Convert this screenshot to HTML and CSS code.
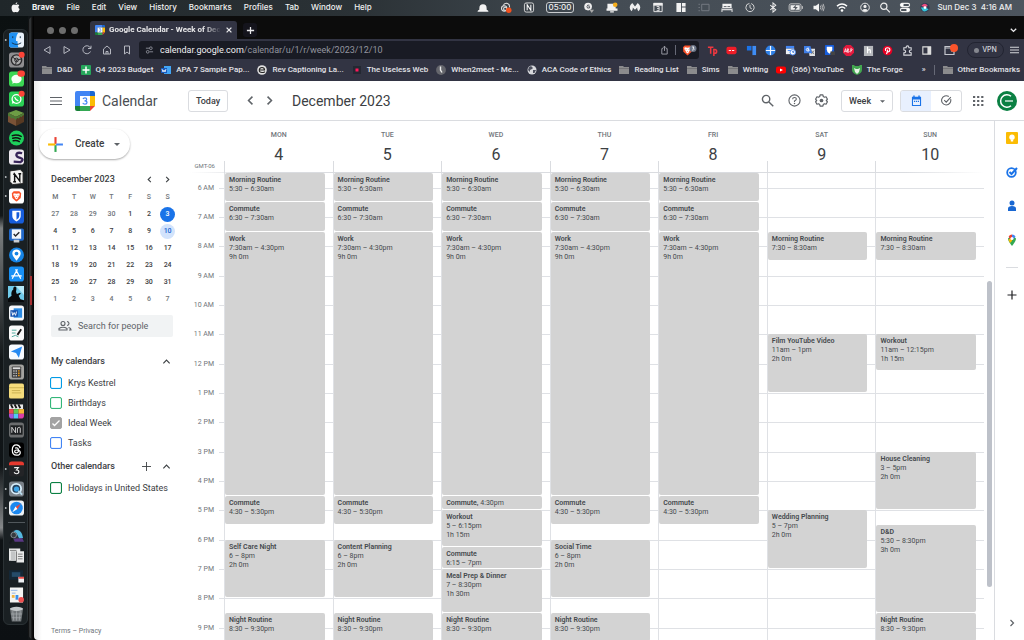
FILE: index.html
```html
<!DOCTYPE html>
<html lang="en">
<head>
<meta charset="utf-8">
<meta name="viewport" content="width=device-width, initial-scale=1">
<title>Google Calendar - Week of December 4, 2023</title>
<link rel="stylesheet" href="styles.css">
</head>
<body>
<svg class="defs" aria-hidden="true">
  <symbol id="gcal" viewBox="0 0 20 20"><path fill="#4285f4" d="M2 0h13v5H5v10H0V2q0-2 2-2z"/><path fill="#1967d2" d="M15 0h3q2 0 2 2v3h-5z"/><path fill="#fbbc04" d="M15 5h5v10h-5z"/><path fill="#34a853" d="M5 15h10v5H5z"/><path fill="#188038" d="M0 15h5v5H2q-2 0-2-2z"/><path fill="#ea4335" d="M15 15h5l-5 5z"/><path fill="#fff" d="M5 5h10v10H5z"/><path fill="none" stroke="#4285f4" stroke-width="1.2" d="M8 8q.4-1.2 2-1.2 1.700 0 1.700 1.500T9.500 9.900q2.500 0 2.500 1.600 0 1.700-2 1.700-1.700 0-2.200-1.300"/></symbol>
  <symbol id="folder" viewBox="0 0 10 10"><path fill="#8b8b8d" d="M0 1h4l1 1h5v7H0z"/><path fill="#747477" d="M0 3h10v1H0z"/></symbol>
  <symbol id="left" viewBox="0 0 10 10"><path fill="none" stroke="currentColor" stroke-width="1.200" d="M6.500 2 3.500 5l3 3"/></symbol>
  <symbol id="right" viewBox="0 0 10 10"><path fill="none" stroke="currentColor" stroke-width="1.200" d="M3.500 2l3 3-3 3"/></symbol>
  <symbol id="up" viewBox="0 0 10 10"><path fill="none" stroke="currentColor" stroke-width="1.300" d="M1.500 7 5 3.500 8.500 7"/></symbol>
  <symbol id="lens" viewBox="0 0 12 12"><g fill="none" stroke="currentColor" stroke-width="1.300"><circle cx="4.700" cy="4.700" r="3.400"/><path d="m7.300 7.300 4 4"/></g></symbol>
  <symbol id="lion" viewBox="0 0 12 12"><path fill="#fb542b" d="M3 1h6l2 2-.5 5L6 12 1.500 8 1 3z"/><path fill="#fff" d="m3 3 3 .6L9 3l.5 2L8 7l-.5 1.500L6 9.800 4.500 8.500 4 7 2.500 5z"/><path fill="#fb542b" d="m3.700 5 1.300.3-.5.7zM8.300 5 7 5.300l.5.7zM5 7h2L6 8z"/></symbol>
</svg>

<header class="menubar">
  <nav class="menus" aria-label="Application menu">
    <svg class="apple" viewBox="0 0 10 12"><path fill="#f3f3f3" d="M5 3.300c.8 0 1.300-.6 2.200-.5 1 0 1.600.5 2 1.100-1.500 1-1.300 3.200.4 3.900C9 9.800 8 11.400 7 11.400c-.7 0-1-.4-1.900-.4s-1.200.4-1.900.4C1.900 11.400.6 8.800.6 6.500c0-2.500 1.400-3.700 2.700-3.700.7 0 1.200.5 1.700.5zM5 2.600C5 1.200 6 .3 7 .2 7.100 1.500 6 2.600 5 2.600z"/></svg>
    <b>Brave</b><span>File</span><span>Edit</span><span>View</span><span>History</span><span>Bookmarks</span><span>Profiles</span><span>Tab</span><span>Window</span><span>Help</span>
  </nav>
  <div class="status">
    <svg viewBox="0 0 12 12"><path fill="#f2f2f2" d="M2 8.500V7q0-4.500 4-4.500T10 7v1.500q2 .5 2 2H0q0-1.500 2-2z"/></svg>
    <svg viewBox="0 0 12 12"><g fill="none" stroke="#ddd" stroke-width="1.200"><circle cx="4" cy="7" r="2.900"/><path d="M3 4q1-3 4-2.500T10 6M6 6q-2-1-2.500 1t2 2"/></g><circle cx="9" cy="9" r="3" fill="#f4511e"/></svg>
    <svg viewBox="0 0 12 12"><rect x="1" y="1" width="10" height="10" rx="2" fill="none" stroke="#ddd"/><path fill="none" stroke="#fff" stroke-width="1.100" d="M4 9V3l4 6V3"/></svg>
    <span class="timer">05:00</span>
    <svg viewBox="0 0 12 12"><circle cx="5" cy="5" r="4.200" fill="#eee"/><path fill="none" stroke="#4a5058" d="M6.500 3.500Q4 2.500 3.800 5T6.600 6.500V5H5.500"/><path fill="#aaa" d="M6.500 8.500h5L9 12z"/></svg>
    <svg viewBox="0 0 12 12"><path fill="#f2f2f2" d="M1 2h9v7H1zM4 10h4v1.500H4zM0 7h12v2.500H0z"/><circle cx="9.500" cy="3" r="2.500" fill="#f5ad1b"/></svg>
    <svg viewBox="0 0 12 12"><path fill="#eee" d="M2 10Q-2 5 3 1l3 4 3-4q5 4 1 9-2-1-1.500-4L6 8.500 3.500 6Q4 9 2 10z"/></svg>
    <svg viewBox="0 0 12 12"><path fill="none" stroke="#eee" d="M1.500 1.500h9v9h-9z"/><path fill="#eee" d="M1 1h10v3H1z"/><path fill="none" stroke="#eee" d="M4.500 5h2.700v4.500H4.500M5 7.200h2"/></svg>
    <svg viewBox="0 0 12 12"><path fill="#f2f2f2" d="M1 1h5v10H1zM7 1h4v4H7zM7 6h4v5H7z"/></svg>
    <svg viewBox="0 0 12 12"><path fill="none" stroke="#777d84" d="M3.500 2.500h8v7h-8zM0 2.500h1.500M0 6h1.500M0 9.500h1.500"/></svg>
    <svg viewBox="0 0 12 12"><path fill="#f2f2f2" d="M1 2h10v4l1 1v4h-1V9H1v2H0V7l1-1z"/><path stroke="#555b62" d="M2.500 5h3M6.500 5h3M0 7.300h12"/></svg>
    <svg viewBox="0 0 12 12"><g fill="none" stroke="#ddd"><circle cx="6" cy="6" r="4.500" stroke-dasharray="20 2"/><path d="M6 3v3.300L8 7.500"/></g></svg>
    <svg viewBox="0 0 12 12"><path fill="none" stroke="#eee" stroke-width="1.100" d="m3 3.500 6 5L6 11V1l3 2.500-6 5"/></svg>
    <svg class="battery" viewBox="0 0 16 12"><rect x=".5" y="2" width="13" height="8" rx="2" fill="none" stroke="#ccc"/><rect x="2" y="3.500" width="10" height="5" fill="#eee"/><path fill="#555b62" d="m8.500 2.500-4 4H7L6 10l4-4.500H7.500z"/><path stroke="#ccc" d="M15 4.500v3"/></svg>
    <svg viewBox="0 0 12 12"><path fill="#f2f2f2" d="M0 4h2.500L6 1.500v9L2.500 8H0z"/><path fill="none" stroke="#ccc" stroke-width=".9" d="M7.500 4q1 2 0 4M9 3q2 3 0 6M10.500 2q2.500 4 0 8"/></svg>
    <svg viewBox="0 0 12 12"><path fill="none" stroke="#fff" stroke-width="1.500" d="M.5 4.500q5.500-4.500 11 0M2.500 7q3.500-3 7 0"/><circle cx="6" cy="9.200" r="1.400" fill="#fff"/></svg>
    <svg viewBox="0 0 12 12"><circle cx="6" cy="6" r="4.700" fill="none" stroke="#eee"/><circle cx="6" cy="4.800" r="1.700" fill="#eee"/><path fill="#eee" d="M2.700 9q3.300-3 6.600 0Q6 11.500 2.700 9z"/></svg>
    <svg class="near" viewBox="0 0 12 12" color="#eee"><use href="#lens"/></svg>
    <svg class="near" viewBox="0 0 12 12"><g fill="none" stroke="#eee" stroke-width="1.200"><rect x="1" y="1.500" width="10" height="3.500" rx="1.700"/><rect x="1" y="7" width="10" height="3.500" rx="1.700"/></g><circle cx="3" cy="3.200" r="1.600" fill="#fff"/><circle cx="9" cy="8.700" r="1.600" fill="#fff"/></svg>
    <svg class="near" viewBox="0 0 12 12"><circle cx="6" cy="6" r="5" fill="#313a55"/><path fill="#e84c7c" d="M2 4q4-4 7 0L6 6z"/><path fill="#36c3d8" d="M1.500 6h5L10 8q-4 4-7 1z"/><circle cx="6" cy="6" r="1.500" fill="#fff"/></svg>
    <time>Sun Dec 3&nbsp; 4:16 AM</time>
  </div>
</header>

<main class="desktop">
  <aside class="dockside">
    <div class="dock" aria-label="Dock">
      <svg viewBox="0 0 16 16"><circle class="dot" cx="-3.500" cy="8" r="1"/><rect width="16" height="16" rx="3" fill="#e9f2fa"/><path fill="#1e90f2" d="M3 0h7q-3 4-2.500 9H9q0 4 1 7H3q-3 0-3-3V3q0-3 3-3z"/><path fill="none" stroke="#16324a" d="M4 4v2M12 4v2M3 11q5 3.500 10 0"/></svg>
      <svg viewBox="0 0 16 16"><rect width="16" height="16" rx="3" fill="#8e8e90"/><circle cx="8" cy="8" r="5.500" fill="#ababab" stroke="#2b2b2d" stroke-width="1.500"/><path stroke="#2b2b2d" fill="none" d="m4 5 4 3 5-1M8 8l-1 5"/><circle cx="8" cy="8" r="2" fill="none" stroke="#2b2b2d"/><circle cx="13.500" cy="2.500" r="3.200" fill="#fb4437"/></svg>
      <svg viewBox="0 0 16 16"><rect width="16" height="16" rx="3" fill="#3bd753"/><ellipse cx="8" cy="8" rx="5.500" ry="4.500" fill="#f6fff6"/><path fill="#f6fff6" d="m4 10-.5 3L7 11.500z"/><rect x="9" y="-1" width="8" height="6.500" rx="3.200" fill="#fb4437"/></svg>
      <svg viewBox="0 0 16 16"><rect width="16" height="16" rx="3" fill="#2bd155"/><circle cx="8" cy="8" r="4.700" fill="none" stroke="#fff" stroke-width="1.400"/><path fill="#fff" d="m3 13 1-3.500L6.500 12z"/><path fill="none" stroke="#fff" stroke-width="1.500" d="M6 6q1 3 4 4"/><circle cx="13.500" cy="2.500" r="3.200" fill="#fb4437"/></svg>
      <svg class="wide" viewBox="0 0 16 16"><path fill="#6d9d45" d="m8 0 8 3-8 4-8-4z"/><path fill="#795236" d="m0 3 8 4v9l-8-4z"/><path fill="#573922" d="m16 3-8 4v9l8-4z"/><path fill="#4b7a34" d="m0 3 8 4 8-4v2l-2 1v1l-2-.5-1 2-2-.5-1 2-2-1.500-1-.5-2 .5-1-2-2-.5z"/></svg>
      <svg viewBox="0 0 16 16"><circle cx="8" cy="8" r="8" fill="#1ed05b"/><path fill="none" stroke="#111" stroke-linecap="round" stroke-width="1.600" d="M3.500 5.500q5-1.500 9.500.8M4 8.300q4-1.200 8 .8M4.500 11q3.500-1 6.500.8"/></svg>
      <svg viewBox="0 0 16 16"><rect width="16" height="16" rx="3" fill="#eee9ef"/><path fill="none" stroke="#382459" stroke-width="2.500" d="M14 4q-5-1.500-6 1t4 4 0 4.500L5 13"/></svg>
      <svg viewBox="0 0 16 16"><circle class="dot" cx="-3.500" cy="8" r="1"/><path fill="#f5f5f3" stroke="#222" d="M1 1.500 12 0l3 3v12L4 16l-3-3z"/><path fill="none" stroke="#111" stroke-width="1.500" d="M6 13V5l5.500 7.500V4.500M4.500 5h2M10 4.500h3M4.500 13h3"/></svg>
      <svg viewBox="0 0 16 16"><circle class="dot" cx="-3.500" cy="8" r="1"/><rect width="16" height="16" rx="3" fill="#fff"/><use href="#lion" x="2" y="2" width="12" height="12"/></svg>
      <svg viewBox="0 0 16 16"><rect width="16" height="16" rx="3" fill="#175ddc"/><path fill="#fff" d="M3.500 2.500h9V8q0 3.500-4.500 5.800Q3.500 11.500 3.500 8z"/><path fill="#175ddc" d="M8 4v8q3-1.700 3-4V4z"/></svg>
      <svg viewBox="0 0 16 16"><rect y="1" width="16" height="13" rx="2" fill="#2168c9"/><path fill="#f5f8fb" d="M3 2h10v10H3z"/><path fill="none" stroke="#25282c" stroke-width="1.500" d="m5 7 2 2 4-4"/><path fill="#c9cdd3" d="M5 13h6v3H5z"/></svg>
      <svg viewBox="0 0 16 16"><circle cx="8" cy="8" r="8" fill="#1684e6"/><path fill="#fff" d="M8 14Q3.500 9 3.500 6.500a4.500 4.500 0 0 1 9 0Q12.500 9 8 14z"/><circle cx="8" cy="6.500" r="2" fill="#1684e6"/></svg>
      <svg viewBox="0 0 16 16"><rect width="16" height="16" rx="3" fill="#1890f5"/><path fill="none" stroke="#fff" stroke-linecap="round" stroke-width="1.400" d="m8.700 3.500-5 9M7.300 3.500l5 9M3 10h6.500M11.500 10H13"/></svg>
      <svg class="wide" viewBox="0 0 18 18"><path fill="#71cbea" d="M0 0h18v18H0z"/><path fill="#b8e9f7" d="M9 0h9v10z"/><path fill="#080a0c" d="M0 18v-4l4-3q-1-5 2-7-.5-3 2-3.500 2 .5 1.500 3L9 6.500 10 9l3.500-1.500 1 1L12 11l2 4 4 1v2z"/></svg>
      <svg viewBox="0 0 16 16"><rect width="16" height="16" rx="3" fill="#f5f7fa"/><path fill="#2c8ce4" d="M5 3h9v10H5z"/><path fill="#1651ae" d="M1.500 5h8v7h-8z"/><path fill="none" stroke="#fff" d="m3 6.500 1 4 1.500-3 1.500 3 1-4"/></svg>
      <svg viewBox="0 0 16 16"><rect width="16" height="16" rx="3" fill="#fafafa"/><path fill="none" stroke="#49a99b" d="M3 5h5M3 8h4M3 12q4-3 7 0"/><path stroke="#181818" stroke-width="2" d="m9 10 4-6"/></svg>
      <svg viewBox="0 0 16 16"><rect width="16" height="16" rx="3" fill="#f8fbff"/><path fill="#288bf2" d="M2 7.500 14 2l-3.500 12-3-5z"/></svg>
      <svg viewBox="0 0 16 16"><rect width="16" height="16" rx="3" fill="#a3a3a0"/><rect x="3" y="2" width="10" height="12" rx="1" fill="#3d3d3d"/><path fill="#ddd" d="M4 3h8v2H4z"/><path stroke="#bbb" stroke-width="1.500" stroke-dasharray="1.500 1" d="M4.500 7h4.500M4.500 9.500h4.500M4.500 12h4.500"/><path stroke="#ff9f0a" stroke-width="1.500" stroke-dasharray="1.500 1" d="M10.500 6v7"/></svg>
      <svg viewBox="0 0 16 16"><rect width="16" height="16" rx="2" fill="#f5dc7c"/><path stroke="#cbb151" d="M0 4.500h16M3 7.500h9M3 10h10"/></svg>
      <svg viewBox="0 0 16 16"><path fill="#e9e9e9" d="M0 1h15v5H0z"/><path stroke="#161616" stroke-width="2" d="m2 1 2 4M6 1l2 4M10 1l2 4"/><path fill="#ed4b4f" d="M0 6h5v5H0z"/><path fill="#62c953" d="M5 6h5v5H5z"/><path fill="#f3b634" d="M10 6h6v5h-6z"/><path fill="#a950d8" d="M0 11h5v5H3q-3 0-3-3z"/><path fill="#4ec9f5" d="M5 11h5v5H5z"/><path fill="#db3fa6" d="M10 11h6v2q0 3-3 3h-3z"/></svg>
      <svg viewBox="0 0 16 16"><rect width="16" height="16" rx="3" fill="#6b6d6e"/><rect x="1.500" y="3" width="13" height="10" fill="#1e2022"/><path fill="none" stroke="#d5d5d5" d="M3 11V5l4 6V5M9 11V6q3-2 3 0v5"/></svg>
      <svg viewBox="0 0 16 16"><rect width="16" height="16" rx="3" fill="#000"/><path fill="none" stroke="#fff" stroke-width="1.300" d="M12 6Q11 2.500 8 2.500 3.500 2.500 3.500 8T8 13.500q4 0 4-2.700Q12 8 8 8q-2 0-2 1.500T8 11q2.500 0 2-3.500Q9.500 5 6.500 6"/></svg>
      <svg viewBox="0 0 16 16"><circle class="dot" cx="-3.500" cy="8" r="1"/><rect width="16" height="16" rx="3" fill="#232427"/><path fill="#e5392f" d="M3 0h10q3 0 3 3v1H0V3q0-3 3-3z"/><path fill="none" stroke="#f1f1f1" stroke-width="1.200" d="M5.500 6.500h4.500L8 9q2.500 0 2.500 2T8 13q-2 0-2.500-1.500"/></svg>
      <svg viewBox="0 0 16 16"><circle class="dot" cx="-3.500" cy="8" r="1"/><rect width="16" height="16" rx="3" fill="#7a8188"/><circle cx="7.700" cy="7.700" r="5.200" fill="#25425d" stroke="#d7edf9" stroke-width="2"/><circle cx="8" cy="8" r="2.800" fill="#3ea5e8"/><path stroke="#b8dcef" stroke-width="2" d="m10 10 4 4"/></svg>
      <svg viewBox="0 0 16 16"><circle class="dot" cx="-3.500" cy="8" r="1"/><rect width="16" height="16" rx="3" fill="#edf1f4"/><circle cx="8" cy="8" r="6.700" fill="#1c88ef"/><path fill="#f14637" d="m12.500 3.500-3.500 6L7 7z"/><path fill="#fff" d="m3.500 12.500 3.500-6L9 9z"/></svg>
      <hr>
      <svg viewBox="0 0 16 16"><circle cx="8" cy="7" r="6" fill="#27343f"/><path fill="#55b8df" d="M5 3q5-4 9 3l1 4-4 1-3-6z"/><circle cx="5" cy="7" r="3" fill="#373b40" stroke="#8b9298"/><path fill="#5a3785" d="m5 11 9-1 2 4H6z"/><path stroke="#16191e" stroke-width="2" d="m4 10-3 6"/></svg>
      <svg viewBox="0 0 16 16"><path fill="#e9eaea" d="M0 0h12v13H0zM8 3h8v12H8z"/><path fill="#c3c5c6" d="M2 3h5v10H2z"/><path fill="none" stroke="#777" d="M1 2h7M9.500 6h5M9.500 8.500h5M9.500 11h5M8 3v11"/></svg>
      <svg viewBox="0 0 16 16"><path fill="#142736" d="M0 3h15v10H0z"/><path fill="#264b69" d="M3 5h9v5H3z"/><path fill="#eceff2" d="M10 10h6v6h-6z"/><path fill="#e94e48" d="M10 10h6v2h-6z"/></svg>
      <svg viewBox="0 0 16 16"><path fill="#f4f4f2" d="M1 0h14v16H1z"/><path stroke="#8cb0e5" d="M2 3h7M3 6h4"/><path fill="#f0b341" d="M3 8h3v3H3z"/><path fill="#398eea" d="M7 8h3v5H7z"/><circle cx="13" cy="13" r="3" fill="#ef5050"/></svg>
      <svg viewBox="0 0 16 16"><path fill="#72777a" d="m1 2 2 14h10l2-14z"/><ellipse cx="8" cy="2.500" rx="7" ry="2.200" fill="#c4c8ca"/><path fill="none" stroke="#a9aeb1" stroke-width=".7" d="m4 5 1 10M8 5v10M12 5l-1 10M2 8h12M3 12h10"/></svg>
    </div>
  </aside>

  <section class="frame">
    <div class="window">
      <div class="tabs">
        <span class="lights"><i></i><i></i><i></i></span>
        <div class="tab"><svg viewBox="0 0 20 20"><use href="#gcal"/></svg><span>Google Calendar - Week of Dec</span><button aria-label="Close tab"><svg viewBox="0 0 10 10"><path stroke="currentColor" stroke-width="1.600" d="m2 2 6 6M8 2 2 8"/></svg></button></div>
        <button class="newtab" aria-label="New tab"><svg viewBox="0 0 10 10"><path stroke="currentColor" stroke-width="1.400" d="M5 1v8M1 5h8"/></svg></button>
        <button class="tablist" aria-label="Search tabs"><svg viewBox="0 0 10 10"><path fill="none" stroke="currentColor" stroke-width="1.500" d="m2 3 3 3 3-3"/></svg></button>
      </div>
      <div class="toolbar">
        <div class="nav">
          <button aria-label="Back"><svg viewBox="0 0 10 10"><path d="M8 1.500v7L2 5z"/></svg></button>
          <button aria-label="Forward"><svg viewBox="0 0 10 10"><path d="M2 1.500v7L8 5z"/></svg></button>
          <button aria-label="Reload"><svg viewBox="0 0 10 10"><path d="M8.500 6.500A4 4 0 1 1 8.500 3M9 .7V3.500H6"/></svg></button>
          <button aria-label="Home"><svg viewBox="0 0 10 10"><path d="M1.500 9V4L5 1l3.500 3v5zM4 9V6.500h2V9"/></svg></button>
          <button aria-label="Bookmark"><svg viewBox="0 0 10 10"><path d="M2.500 1h5v8L5 7 2.500 9z"/></svg></button>
        </div>
        <div class="address">
          <svg viewBox="0 0 10 10"><path fill="none" stroke="#8d909a" d="M1 3h4M5 7h4"/><circle cx="6.500" cy="3" r="1.500" fill="none" stroke="#8d909a"/><circle cx="3" cy="7" r="1.500" fill="none" stroke="#8d909a"/></svg>
          <span class="url"><em>calendar.google.com</em>/calendar/u/1/r/week/2023/12/10</span>
          <svg viewBox="0 0 10 10"><path fill="none" stroke="#a1a3ac" d="M3.500 3.500H2v6h6v-6H6.500M5 6V.800M3.300 2.500 5 .800l1.700 1.700"/></svg>
          <i class="bar"></i>
          <svg class="shield" viewBox="0 0 16 12"><use href="#lion" width="11" height="12"/><circle cx="11" cy="4.500" r="3.500" fill="#6d7688"/><path fill="none" stroke="#fff" stroke-width=".8" d="M10 3h2L11 4.200q1.300.2 1 1.200t-2 .6"/></svg>
        </div>
        <div class="exts">
          <svg viewBox="0 0 12 12"><path fill="none" stroke="#ef3840" stroke-width="1.700" d="M1 2.500h6M4 2.500v7M7.500 12V5h1q2 0 2 2t-2 2h-1"/></svg>
          <svg viewBox="0 0 12 12"><rect x=".5" y="2" width="11" height="8" rx="2" fill="#f01d28"/><path stroke="#fff" d="M3 6h2.500M6.500 6H9"/></svg>
          <svg viewBox="0 0 12 12"><path fill="#1a73e8" d="M1 1h5v5H1z"/><path fill="#3f8df5" d="M7 1h4v10H7z"/></svg>
          <svg viewBox="0 0 12 12"><circle cx="6" cy="6" r="5.500" fill="#2f80e7"/><path stroke="#f4f8ff" stroke-width="1.300" d="M6 1v10M1 6h10"/></svg>
          <svg viewBox="0 0 12 12"><path fill="#4285f4" d="M1 1h9v3H1z"/><path fill="#eef1f6" d="M1 4h9v6H1z"/><circle cx="8.500" cy="8" r="3" fill="#fff" stroke="#4285f4"/><path stroke="#4285f4" d="M3 6h3M8.500 6.500V8H10"/></svg>
          <svg viewBox="0 0 12 12"><path fill="#e1e3e6" d="M5 4h7v8H6z"/><path fill="#3f7ee7" d="M0 1h7l2 8H0z"/><path fill="none" stroke="#fff" d="M5.500 3.500q-3-.5-3 1.500t3 1.500V5H4"/><path stroke="#777" d="m8 6 3 4M11 6 8 10"/></svg>
          <svg viewBox="0 0 12 12"><rect x="1" y="0" width="10" height="11" rx="1" fill="#175ddc"/><path fill="#fff" d="M3 2h6v3q0 3-3 4.500Q3 8 3 5z"/><path fill="#444" d="M7 7h5v4H7z"/></svg>
          <svg viewBox="0 0 12 12"><path fill="#e4193c" d="M3.500 0h5L12 3.500v5L8.500 12h-5L0 8.500v-5z"/><path fill="none" stroke="#fff" stroke-width=".8" d="m1.500 8 1.300-4L4 8M2 6.800h1.800M5 4v4q4-.3 0-2 3-1.500 0-2M8.500 8V4q3.500 1 0 2.300"/></svg>
          <svg viewBox="0 0 12 12"><path fill="#b5b7bc" d="M1 1h10v11H1z"/><path fill="none" stroke="#fff" stroke-width="1.300" d="M5 2v7M5 6q3-2 3 0v3"/></svg>
          <svg viewBox="0 0 12 12"><circle cx="6" cy="6" r="5.300" fill="#e60023"/><path fill="none" stroke="#fff" stroke-width="1.300" d="M4 6.500Q3 3 6 3t2.500 2.500Q8 8 6 7.500M6.200 5 5 10"/></svg>
          <svg viewBox="0 0 12 12"><path fill="none" stroke="#d5d6dc" stroke-width="1.200" d="M2 3h2.500q0-2 1.500-2t1.500 2H10v2.500Q8 5.500 8 7t2 1.500V11H2V8.500q2 0 2-1.500T2 5.500z"/></svg>
          <svg viewBox="0 0 12 12"><path fill="none" stroke="#ddd" stroke-width="1.200" d="M2 2h8.500v8H2z"/><path fill="#ddd" d="M7 2h4v8H7z"/></svg>
        </div>
        <svg class="wallet" viewBox="0 0 14 12"><path fill="none" stroke="#c5c7ce" stroke-width="1.200" d="M10 6v4.500H1v-8h7M1 4h8M7 7h3"/><circle cx="10" cy="4" r="4" fill="#fb542b"/></svg>
        <button class="vpn"><i></i>VPN</button>
        <button class="burger" aria-label="Menu"><svg viewBox="0 0 10 10"><path stroke="currentColor" stroke-width="1.200" d="M0 2h10M0 5h10M0 8h10"/></svg></button>
      </div>
      <nav class="bookmarks" aria-label="Bookmarks">
        <a href="#"><svg viewBox="0 0 10 10"><use href="#folder"/></svg>D&amp;D</a>
        <a href="#"><svg viewBox="0 0 10 10"><rect width="10" height="10" rx="1" fill="#26a65b"/><path stroke="#fff" stroke-width="1.500" d="M5 1.500v7M1.500 5h7"/></svg>Q4 2023 Budget</a>
        <a href="#"><svg viewBox="0 0 10 10"><path fill="#42a5f5" d="M3 1h7v8H3z"/><path fill="#185abd" d="M0 3h6v5H0z"/><path fill="none" stroke="#fff" stroke-width=".8" d="m1 4 1 3 1-2 1 2 1-3"/></svg>APA 7 Sample Pap...</a>
        <a href="#"><svg viewBox="0 0 10 10"><circle cx="5" cy="5" r="4.800" fill="#e1e1e1"/><path fill="none" stroke="#222" stroke-width="1.200" d="M3 5h4.500q0-2.500-2.500-2.500T2.300 5 5 7.500t2.500-1"/></svg>Rev Captioning La...</a>
        <a href="#"><svg viewBox="0 0 10 10"><path fill="#232832" d="M1 1h8v8H1z"/><path fill="#ff175a" d="M3.500 3.500h3v3h-3z"/></svg>The Useless Web</a>
        <a href="#"><svg viewBox="0 0 10 10"><circle cx="5" cy="5" r="4.900" fill="#65666c"/><path fill="none" stroke="#eee" stroke-width="1.400" d="M4.500 1.500V5L6 7.500"/></svg>When2meet - Me...</a>
        <a href="#"><svg viewBox="0 0 10 10"><circle cx="5" cy="5" r="4.500" fill="#d7d8dc"/><path fill="#4c4f5d" d="m2 2 2-1 2 2-1 1-2 1v2L1 5zM6 5h3L7.500 8 6 8z"/></svg>ACA Code of Ethics</a>
        <a href="#"><svg viewBox="0 0 10 10"><use href="#folder"/></svg>Reading List</a>
        <a href="#"><svg viewBox="0 0 10 10"><use href="#folder"/></svg>Sims</a>
        <a href="#"><svg viewBox="0 0 10 10"><use href="#folder"/></svg>Writing</a>
        <a href="#"><svg viewBox="0 0 10 10"><rect y="1.500" width="10" height="7" rx="2" fill="#f00"/><path fill="#fff" d="m4 3.500 3 1.500-3 1.500z"/></svg>(366) YouTube</a>
        <a href="#"><svg viewBox="0 0 10 10"><path fill="#43a650" d="M0 0h2l1 1h4l1-1h2v5q0 3-5 5-5-2-5-5z"/><path fill="#e7f4e7" d="m2 3 2 1h2l2-1-1 4-2 2-2-2z"/></svg>The Forge</a>
        <button class="more" aria-label="More bookmarks">»</button><i class="bar"></i>
        <a href="#"><svg viewBox="0 0 10 10"><use href="#folder"/></svg>Other Bookmarks</a>
      </nav>

      <div class="page">
        <header class="apphead">
          <button class="icon" aria-label="Main menu"><svg viewBox="0 0 12 12"><path stroke="currentColor" stroke-width="1.200" d="M0 2.500h12M0 6h12M0 9.500h12"/></svg></button>
          <svg class="logo" viewBox="0 0 20 20"><use href="#gcal"/></svg>
          <span class="brand">Calendar</span>
          <button class="today">Today</button>
          <button class="icon step" aria-label="Previous week"><svg viewBox="0 0 10 10"><use href="#left"/></svg></button>
          <button class="icon step" aria-label="Next week"><svg viewBox="0 0 10 10"><use href="#right"/></svg></button>
          <h1>December 2023</h1>
          <div class="tools">
            <button class="icon" aria-label="Search"><svg viewBox="0 0 12 12"><use href="#lens"/></svg></button>
            <button class="icon" aria-label="Help"><svg viewBox="0 0 14 14"><g fill="none" stroke="currentColor" stroke-width="1.200"><circle cx="7" cy="7" r="6"/><path d="M5 5.700Q5 3.800 7 3.800t2 1.700Q9 6.500 7 7.500v1.200"/></g><circle cx="7" cy="10.300" r=".8" fill="currentColor"/></svg></button>
            <button class="icon" aria-label="Settings"><svg viewBox="0 0 14 14"><path fill="none" stroke="currentColor" stroke-width="1.300" stroke-linejoin="round" d="M5.500 1h3l.4 1.700 1.300.8 1.700-.5 1.500 2.600L12.200 7l1.200 1.400-1.500 2.600-1.700-.5-1.300.8L8.500 13h-3l-.4-1.700-1.300-.8-1.700.5L.6 8.400 1.800 7 .6 5.600 2.100 3l1.700.5 1.300-.8z"/><circle cx="7" cy="7" r="2" fill="currentColor"/></svg></button>
          </div>
          <select class="view" aria-label="View"><option>Week</option><option>Day</option><option>Month</option></select>
          <div class="toggle">
            <button class="on" aria-label="Calendar"><svg viewBox="0 0 12 12"><path fill="#1a73e8" d="M1 2h1.500V.5H4V2h4V.5h1.500V2H11v10H1z"/><path fill="#e8f0fe" d="M2.200 5h7.600v5.800H2.200z"/><path stroke="#1a73e8" stroke-dasharray="1.300 .8" stroke-width="1.300" d="M3.200 7h6"/></svg></button>
            <button aria-label="Tasks"><svg viewBox="0 0 12 12"><path fill="none" stroke="#5f6368" stroke-width="1.200" d="M10.500 4.500A5 5 0 1 1 8.500 1.700M3.500 5.700l2.200 2.200 5-5.500"/></svg></button>
          </div>
          <button class="icon" aria-label="Google apps"><svg viewBox="0 0 12 12"><path stroke="currentColor" stroke-width="2.200" stroke-dasharray="2.200 1.900" d="M1 2h11M1 6h11M1 10h11"/></svg></button>
          <button class="avatar" aria-label="Account"><svg viewBox="0 0 20 20"><circle cx="10" cy="10" r="10" fill="#0b8043"/><path fill="none" stroke="#fff" stroke-width="1.500" d="M14 5.200a6.300 6.300 0 1 0 0 9.600"/><path stroke="#fff" stroke-width="1.200" d="M8 10h8"/></svg></button>
        </header>

        <div class="content">
          <aside class="sidebar">
            <button class="create"><svg viewBox="0 0 16 16"><path fill="#ea4335" d="M7 1h2v6.500H7z"/><path fill="#34a853" d="M7 8.500h2V15H7z"/><path fill="#fbbc04" d="M1 7h7v2H1z"/><path fill="#4285f4" d="M9 7h6v2H8z"/></svg>Create<span class="caret"></span></button>
            <div class="sidehead month">December 2023<span class="arrows"><button aria-label="Previous month"><svg viewBox="0 0 10 10"><use href="#left"/></svg></button><button aria-label="Next month"><svg viewBox="0 0 10 10"><use href="#right"/></svg></button></span></div>
            <table class="mini">
              <thead><tr><th>M</th><th>T</th><th>W</th><th>T</th><th>F</th><th>S</th><th>S</th></tr></thead>
              <tbody>
                <tr><td class="out">27</td><td class="out">28</td><td class="out">29</td><td class="out">30</td><td>1</td><td>2</td><td><span class="now">3</span></td></tr>
                <tr><td>4</td><td>5</td><td>6</td><td>7</td><td>8</td><td>9</td><td><span class="picked">10</span></td></tr>
                <tr><td>11</td><td>12</td><td>13</td><td>14</td><td>15</td><td>16</td><td>17</td></tr>
                <tr><td>18</td><td>19</td><td>20</td><td>21</td><td>22</td><td>23</td><td>24</td></tr>
                <tr><td>25</td><td>26</td><td>27</td><td>28</td><td>29</td><td>30</td><td>31</td></tr>
                <tr><td class="out">1</td><td class="out">2</td><td class="out">3</td><td class="out">4</td><td class="out">5</td><td class="out">6</td><td class="out">7</td></tr>
              </tbody>
            </table>
            <label class="people"><svg viewBox="0 0 14 12"><g fill="none" stroke="#5f6368" stroke-width="1.100"><circle cx="5" cy="3.500" r="2"/><path d="M1 10V8.500q4-2.500 8 0V10zM9 1.500q2 .3 2 2t-2 2M10.500 7.500q2.500.5 2.500 2.500h-2"/></g></svg><input type="text" placeholder="Search for people" aria-label="Search for people"></label>
            <div class="sidehead group">My calendars<button aria-label="Collapse my calendars"><svg viewBox="0 0 10 10"><use href="#up"/></svg></button></div>
            <label class="cal blue"><input type="checkbox">Krys Kestrel</label>
            <label class="cal mint"><input type="checkbox">Birthdays</label>
            <label class="cal grey"><input type="checkbox" checked>Ideal Week</label>
            <label class="cal sky"><input type="checkbox">Tasks</label>
            <div class="sidehead other">Other calendars<span class="arrows"><button aria-label="Add calendar"><svg viewBox="0 0 10 10"><path stroke="currentColor" d="M5 0v10M0 5h10"/></svg></button><button aria-label="Collapse other calendars"><svg viewBox="0 0 10 10"><use href="#up"/></svg></button></span></div>
            <label class="cal green"><input type="checkbox">Holidays in United States</label>
            <p class="legal"><a href="#">Terms</a> – <a href="#">Privacy</a></p>
          </aside>

          <section class="week">
            <div class="days">
              <div class="zone">GMT-06</div>
              <div class="day">MON<b>4</b></div><div class="day">TUE<b>5</b></div><div class="day">WED<b>6</b></div><div class="day">THU<b>7</b></div><div class="day">FRI<b>8</b></div><div class="day">SAT<b>9</b></div><div class="day">SUN<b>10</b></div>
            </div>
            <div class="board">
              <i class="line" style="grid-row:3"></i><i class="line" style="grid-row:7"></i><i class="line" style="grid-row:11"></i><i class="line" style="grid-row:15"></i><i class="line" style="grid-row:19"></i><i class="line" style="grid-row:23"></i><i class="line" style="grid-row:27"></i><i class="line" style="grid-row:31"></i><i class="line" style="grid-row:35"></i><i class="line" style="grid-row:39"></i><i class="line" style="grid-row:43"></i><i class="line" style="grid-row:47"></i><i class="line" style="grid-row:51"></i><i class="line" style="grid-row:55"></i><i class="line" style="grid-row:59"></i><i class="line" style="grid-row:63"></i>
              <i class="col mon"></i><i class="col tue"></i><i class="col wed"></i><i class="col thu"></i><i class="col fri"></i><i class="col sat"></i><i class="col sun"></i>
              <span class="hour" style="grid-row:2/4">6 AM</span><span class="hour" style="grid-row:6/8">7 AM</span><span class="hour" style="grid-row:10/12">8 AM</span><span class="hour" style="grid-row:14/16">9 AM</span><span class="hour" style="grid-row:18/20">10 AM</span><span class="hour" style="grid-row:22/24">11 AM</span><span class="hour" style="grid-row:26/28">12 PM</span><span class="hour" style="grid-row:30/32">1 PM</span><span class="hour" style="grid-row:34/36">2 PM</span><span class="hour" style="grid-row:38/40">3 PM</span><span class="hour" style="grid-row:42/44">4 PM</span><span class="hour" style="grid-row:46/48">5 PM</span><span class="hour" style="grid-row:50/52">6 PM</span><span class="hour" style="grid-row:54/56">7 PM</span><span class="hour" style="grid-row:58/60">8 PM</span><span class="hour" style="grid-row:62/64">9 PM</span>

              <div class="event mon" style="grid-row:1/5"><b>Morning Routine</b><br>5:30 – 6:30am</div>
              <div class="event mon" style="grid-row:5/9"><b>Commute</b><br>6:30 – 7:30am</div>
              <div class="event mon" style="grid-row:9/45"><b>Work</b><br>7:30am – 4:30pm<br>9h 0m</div>
              <div class="event mon" style="grid-row:45/49"><b>Commute</b><br>4:30 – 5:30pm</div>
              <div class="event mon" style="grid-row:51/59"><b>Self Care Night</b><br>6 – 8pm<br>2h 0m</div>
              <div class="event mon" style="grid-row:61/65"><b>Night Routine</b><br>8:30 – 9:30pm</div>

              <div class="event tue" style="grid-row:1/5"><b>Morning Routine</b><br>5:30 – 6:30am</div>
              <div class="event tue" style="grid-row:5/9"><b>Commute</b><br>6:30 – 7:30am</div>
              <div class="event tue" style="grid-row:9/45"><b>Work</b><br>7:30am – 4:30pm<br>9h 0m</div>
              <div class="event tue" style="grid-row:45/49"><b>Commute</b><br>4:30 – 5:30pm</div>
              <div class="event tue" style="grid-row:51/59"><b>Content Planning</b><br>6 – 8pm<br>2h 0m</div>
              <div class="event tue" style="grid-row:61/65"><b>Night Routine</b><br>8:30 – 9:30pm</div>

              <div class="event wed" style="grid-row:1/5"><b>Morning Routine</b><br>5:30 – 6:30am</div>
              <div class="event wed" style="grid-row:5/9"><b>Commute</b><br>6:30 – 7:30am</div>
              <div class="event wed" style="grid-row:9/45"><b>Work</b><br>7:30am – 4:30pm<br>9h 0m</div>
              <div class="event wed" style="grid-row:45/47"><b>Commute,</b> 4:30pm</div>
              <div class="event wed" style="grid-row:47/52"><b>Workout</b><br>5 – 6:15pm<br>1h 15m</div>
              <div class="event wed" style="grid-row:52/55"><b>Commute</b><br>6:15 – 7pm</div>
              <div class="event wed" style="grid-row:55/61"><b>Meal Prep &amp; Dinner</b><br>7 – 8:30pm<br>1h 30m</div>
              <div class="event wed" style="grid-row:61/65"><b>Night Routine</b><br>8:30 – 9:30pm</div>

              <div class="event thu" style="grid-row:1/5"><b>Morning Routine</b><br>5:30 – 6:30am</div>
              <div class="event thu" style="grid-row:5/9"><b>Commute</b><br>6:30 – 7:30am</div>
              <div class="event thu" style="grid-row:9/45"><b>Work</b><br>7:30am – 4:30pm<br>9h 0m</div>
              <div class="event thu" style="grid-row:45/49"><b>Commute</b><br>4:30 – 5:30pm</div>
              <div class="event thu" style="grid-row:51/59"><b>Social Time</b><br>6 – 8pm<br>2h 0m</div>
              <div class="event thu" style="grid-row:61/65"><b>Night Routine</b><br>8:30 – 9:30pm</div>

              <div class="event fri" style="grid-row:1/5"><b>Morning Routine</b><br>5:30 – 6:30am</div>
              <div class="event fri" style="grid-row:5/9"><b>Commute</b><br>6:30 – 7:30am</div>
              <div class="event fri" style="grid-row:9/45"><b>Work</b><br>7:30am – 4:30pm<br>9h 0m</div>
              <div class="event fri" style="grid-row:45/49"><b>Commute</b><br>4:30 – 5:30pm</div>

              <div class="event sat" style="grid-row:9/13"><b>Morning Routine</b><br>7:30 – 8:30am</div>
              <div class="event sat" style="grid-row:23/31"><b>Film YouTube Video</b><br>11am – 1pm<br>2h 0m</div>
              <div class="event sat" style="grid-row:47/55"><b>Wedding Planning</b><br>5 – 7pm<br>2h 0m</div>

              <div class="event sun" style="grid-row:9/13"><b>Morning Routine</b><br>7:30 – 8:30am</div>
              <div class="event sun" style="grid-row:23/28"><b>Workout</b><br>11am – 12:15pm<br>1h 15m</div>
              <div class="event sun" style="grid-row:39/47"><b>House Cleaning</b><br>3 – 5pm<br>2h 0m</div>
              <div class="event sun" style="grid-row:49/61"><b>D&amp;D</b><br>5:30 – 8:30pm<br>3h 0m</div>
              <div class="event sun" style="grid-row:61/65"><b>Night Routine</b><br>8:30 – 9:30pm</div>
            </div>
          </section>
          <div class="scroll"><i></i></div>

          <aside class="rail">
            <button aria-label="Keep"><svg viewBox="0 0 12 12"><rect width="12" height="12" rx="1" fill="#fbbc04"/><circle cx="6" cy="5.300" r="2.700" fill="#fff"/><path fill="#fff" d="M4.800 8h2.400v1.500H4.800z"/></svg></button>
            <button aria-label="Tasks"><svg viewBox="0 0 12 12"><circle cx="5.500" cy="6.500" r="4.300" fill="none" stroke="#1a73e8" stroke-width="1.800"/><path fill="none" stroke="#1a73e8" stroke-width="2" d="M3.500 6 5.500 8 11 2"/></svg></button>
            <button aria-label="Contacts"><svg viewBox="0 0 12 12"><circle cx="6" cy="3" r="2.500" fill="#1967d2"/><path fill="#1967d2" d="M2 11V8.500Q2 6 6 6t4 2.500V11z"/></svg></button>
            <button aria-label="Maps"><svg viewBox="0 0 12 12"><path fill="#34a853" d="M6 12Q2 7 2 4.500L6 1l4 3.500Q10 7 6 12z"/><path fill="#ea4335" d="M2.700 2.200A4 4 0 0 1 6 .500v3.500L4 6z"/><path fill="#4285f4" d="M6 .5a4 4 0 0 1 3.600 2.200L6 6z"/><path fill="#fbbc04" d="M2.300 5.500 6 4v3L4 9z"/><circle cx="6" cy="4.500" r="1.500" fill="#fff"/></svg></button>
            <hr>
            <button aria-label="Get add-ons"><svg viewBox="0 0 12 12"><path stroke="#202124" stroke-width="1.200" d="M6 1.500v9M1.500 6h9"/></svg></button>
            <button class="hide" aria-label="Hide side panel"><svg viewBox="0 0 12 12" color="#5f6368"><use href="#right" x="1" y="1" width="10" height="10"/></svg></button>
          </aside>
        </div>
      </div>
    </div>
  </section>
</main>
</body>
</html>
```
FILE: styles.css
```css
* { box-sizing: border-box; }
html, body { height: 100%; }
body {
  margin: 0;
  display: flex;
  flex-direction: column;
  background: #101416;
  font-family: Roboto, "Liberation Sans", sans-serif;
  color: #3c4043;
  overflow: hidden;
}
button {
  margin: 0;
  padding: 0;
  border: 0;
  background: none;
  font: inherit;
  color: inherit;
  display: flex;
  align-items: center;
  justify-content: center;
}
svg { display: block; flex: none; }
a { color: inherit; text-decoration: none; }
.defs { display: none; }

/* System menu bar */
.menubar {
  flex: none;
  height: 16px;
  padding: 0 12px 2px 11px;
  display: flex;
  align-items: center;
  justify-content: space-between;
  background: linear-gradient(90deg, #20272a, #2b3236 35%, #444c54 60%, #4d555e);
  color: #f0f0f0;
  font: 500 8px/14px Inter, sans-serif;
}
.menus, .status { display: flex; align-items: center; white-space: nowrap; }
.menus { gap: 12px; }
.apple { width: 9px; height: 11px; }
.status svg { width: 12px; height: 11px; margin-right: 11px; }
.status .battery { width: 16px; margin: 0 9px 0 -2px; }
.status .near, .status svg:has(+ .near) { margin-right: 8px; }
.status .near:has(+ time) { margin-right: 6px; }
.timer {
  margin-right: 9px;
  padding: 0 2px;
  border: 1px solid #c8cbce;
  border-radius: 3px;
  line-height: 9px;
}

/* Desktop and dock */
.desktop { flex: 1; min-height: 0; display: flex; }
.dockside {
  flex: none;
  width: 28px;
  padding: 13px 0 15px 3px;
  background:
    linear-gradient(transparent 32%, #7c7f80 34%, #4c5052 43%, transparent 55%, transparent 72%, #85888a 82%, transparent 84%) 0 0 / 3px 100% no-repeat,
    linear-gradient(#0b1011, #14191b 40%, #0c1013);
}
.dock {
  height: 100%;
  padding: 2px 3px 2px 5px;
  display: flex;
  flex-direction: column;
  justify-content: space-between;
  border: 1px solid #2b3235;
  border-radius: 6px;
  background: #1a2023;
}
.dock svg { width: 15px; height: 16px; overflow: visible; }
.dock .wide { width: 18px; margin-left: -2px; }
.dock .dot { fill: #b9bdbf; }
.dock hr { width: 17px; margin: 2px 0 2px -1px; border: 0; border-top: 1px solid #51585c; }

/* Browser window */
.frame {
  flex: 1;
  min-width: 0;
  padding-left: 6px;
  border-radius: 7px 0 0 7px;
  background:
    linear-gradient(#a52f31, #a52f31) 2px 260px / 2px 29px no-repeat,
    linear-gradient(90deg, #050505, #3b3e40 2px, #101010 4px, #000 6px);
}
.window { height: 100%; display: flex; flex-direction: column; }
.tabs {
  flex: none;
  height: 23px;
  padding: 5px 6px 0 13px;
  display: flex;
  align-items: center;
  background: #0c0c0c;
  color: #e8e8ea;
}
.lights { display: flex; gap: 5px; width: 43px; }
.lights i { width: 7px; height: 7px; border-radius: 50%; background: #6d6d6d; }
.tab {
  width: 147px;
  height: 18px;
  padding: 0 4px 0 5px;
  display: flex;
  align-items: center;
  gap: 4px;
  border-radius: 3px 3px 0 0;
  background: #323443;
  font: 700 8px/18px Roboto, sans-serif;
}
.tab > svg { width: 10px; height: 10px; }
.tab span {
  flex: 1;
  white-space: nowrap;
  -webkit-mask-image: linear-gradient(90deg, #000 85%, transparent);
  mask-image: linear-gradient(90deg, #000 85%, transparent);
}
.tab button svg { width: 8px; height: 8px; }
.newtab { width: 14px; height: 14px; margin-left: 6px; background: #14141c; border-radius: 3px; }
.newtab svg { width: 9px; height: 9px; }
.tablist { margin-left: auto; }
.tablist svg { width: 9px; height: 9px; }

.toolbar {
  flex: none;
  height: 22px;
  padding: 1px 5px 1px 8px;
  display: flex;
  align-items: center;
  background: #323443;
  color: #d5d6dc;
}
.nav { display: flex; gap: 10px; width: 97px; }
.nav svg { width: 10px; height: 10px; fill: none; stroke: #b5b7c0; stroke-width: 1; }
.address {
  flex: 1;
  height: 18px;
  padding: 0 1px 0 6px;
  display: flex;
  align-items: center;
  gap: 6px;
  border-radius: 3px;
  background: #191b24;
}
.address svg { width: 9px; height: 10px; }
.address .shield { width: 16px; height: 12px; }
.url { flex: 1; color: #93959f; font: 9px/18px Roboto, sans-serif; white-space: nowrap; overflow: hidden; }
.url em { color: #f0f0f2; font-style: normal; }
.bar { width: 1px; height: 10px; background: #666976; }
.exts { display: flex; justify-content: space-between; width: 225px; margin: 0 12px 0 8px; }
.exts svg { width: 11px; height: 11px; }
.wallet { width: 14px; height: 12px; }
.vpn {
  width: 37px;
  height: 16px;
  margin: 0 6px 0 9px;
  gap: 3px;
  border: 1px solid #222431;
  border-radius: 8px;
  font: 500 7px/14px Inter, sans-serif;
}
.vpn i { width: 5px; height: 5px; border-radius: 50%; background: #85878f; }
.burger svg { width: 9px; height: 10px; }

.bookmarks {
  flex: none;
  height: 20px;
  padding: 0 4px 3px 8px;
  display: flex;
  align-items: center;
  gap: 8px;
  background: #323443;
  color: #e2e3e8;
  font: 500 8px/16px Roboto, sans-serif;
  white-space: nowrap;
}
.bookmarks a { display: flex; align-items: center; gap: 5px; }
.bookmarks svg { width: 10px; height: 10px; }
.more { margin-left: auto; }

/* Calendar header */
.page {
  flex: 1;
  min-height: 0;
  display: flex;
  flex-direction: column;
  border-radius: 0 0 0 4px;
  background: linear-gradient(90deg, #ececec, #fff 8px);
}
.apphead {
  flex: none;
  height: 40px;
  padding: 0 7px 0 16px;
  display: flex;
  align-items: center;
  border-bottom: 1px solid #dadce0;
}
.icon { color: #5f6368; }
.icon svg { width: 12px; height: 12px; }
.logo { width: 20px; height: 20px; margin: 0 7px 0 13px; }
.brand { width: 86px; font: 14px/20px Roboto, sans-serif; color: #4a4e52; }
.today {
  width: 40px;
  height: 22px;
  margin-right: 16px;
  border: 1px solid #dadce0;
  border-radius: 3px;
  font: 500 9px/20px Roboto, sans-serif;
}
.step { width: 12px; margin-right: 7px; }
.step svg { width: 13px; height: 13px; }
h1 { margin: 0 auto 0 10px; font: 14px/20px Roboto, sans-serif; }
.tools { display: flex; gap: 14px; margin-right: 13px; }
.tools svg { width: 13px; height: 13px; }
.view {
  appearance: none;
  width: 52px;
  height: 22px;
  margin-right: 7px;
  padding: 0 0 0 7px;
  border: 1px solid #dadce0;
  border-radius: 3px;
  color: #3c4043;
  font: 500 9px/20px Roboto, sans-serif;
  background: #fff url("data:image/svg+xml,%3Csvg xmlns='http://www.w3.org/2000/svg' viewBox='0 0 6 3'%3E%3Cpath fill='%235f6368' d='M0 0h6L3 3z'/%3E%3C/svg%3E") 38px 9px / 5px 3px no-repeat;
}
.toggle { display: flex; height: 22px; margin-right: 10px; border: 1px solid #dadce0; border-radius: 3px; overflow: hidden; }
.toggle button { width: 30px; }
.toggle .on { background: #e8f0fe; }
.toggle svg { width: 11px; height: 11px; }
.avatar { margin-left: 13px; }
.avatar svg { width: 20px; height: 20px; }

/* Left sidebar */
.content { flex: 1; min-height: 0; display: flex; }
.sidebar { flex: none; width: 156px; padding: 8px 17px 4px 17px; display: flex; flex-direction: column; font-size: 9px; }
.create {
  width: 91px;
  height: 30px;
  margin: 0 0 12px -12px;
  padding: 0 10px 0 8px;
  justify-content: flex-start;
  border-radius: 15px;
  background: #fff;
  box-shadow: 0 1px 2px #0005;
  font: 500 10px/30px Roboto, sans-serif;
}
.create svg { width: 17px; height: 17px; margin-right: 11px; }
.caret { margin-left: auto; border: 3px solid transparent; border-top-color: #5f6368; border-bottom: 0; }
.sidehead {
  flex: none;
  height: 16px;
  display: flex;
  align-items: center;
  justify-content: space-between;
  font: 500 9px/16px Roboto, sans-serif;
}
.sidehead svg { width: 9px; height: 9px; }
.arrows { display: flex; gap: 11px; }
.sidehead .arrows, .sidehead > button { margin-right: 2px; color: #3c4043; }
.month .arrows { gap: 9px; margin-right: 1px; }
.mini { width: 131px; margin: 2px -9px 7px -5px; border-collapse: collapse; table-layout: fixed; font: 500 7px/15px Roboto, sans-serif; text-align: center; }
.mini th, .mini td { height: 17px; padding: 0; font-weight: 500; }
.mini th, .mini .out { color: #70757a; }
.mini span { display: block; width: 15px; height: 15px; margin: 0 auto; border-radius: 50%; }
.mini .now { background: #1a73e8; color: #fff; }
.mini .picked { background: #d2e3fc; color: #1967d2; }
.people {
  flex: none;
  height: 22px;
  padding-left: 7px;
  display: flex;
  align-items: center;
  gap: 6px;
  border-radius: 2px;
  background: #f1f3f4;
}
.people svg { width: 14px; height: 12px; }
.people input { flex: 1; min-width: 0; padding: 0; border: 0; background: none; font: 9px/20px Roboto, sans-serif; }
.people input::placeholder { color: #5f6368; }
.group { margin: 16px 0 4px; }
.other { margin: 5px 0 4px; }
.cal { flex: none; height: 20px; display: flex; align-items: center; gap: 6px; white-space: nowrap; }
.cal input { appearance: none; flex: none; width: 12px; height: 12px; margin: 0 0 0 -1px; border: 1px solid var(--tint); border-radius: 2px; box-shadow: inset 0 0 1px var(--tint); background: #fff; }
.blue { --tint: #039be5; }
.mint { --tint: #33b679; }
.grey { --tint: #a3a3a3; }
.sky { --tint: #4285f4; }
.green { --tint: #0b8043; }
.grey input {
  background: #a3a3a3 url("data:image/svg+xml,%3Csvg xmlns='http://www.w3.org/2000/svg' viewBox='0 0 10 10'%3E%3Cpath fill='none' stroke='white' stroke-width='1.300' d='M1.500 5.500l2 2 5-5'/%3E%3C/svg%3E");
}
.legal { margin: auto 0 0; font-size: 7px; line-height: 10px; color: #70757a; }

/* Week grid */
.week { flex: 1; min-width: 0; display: flex; flex-direction: column; overflow: hidden; }
.days, .board { display: grid; grid-template-columns: 29px 5px repeat(7, minmax(0, 1fr)); }
.days {
  flex: none;
  height: 52px;
  background: linear-gradient(90deg, transparent, #dadce0 8%, #dadce0 90%, transparent) 0 100% / 100% 1px no-repeat;
}
.zone { align-self: end; justify-self: end; padding-bottom: 3px; grid-column: 1; font-size: 6px; line-height: 8px; color: #70757a; margin-right: 4px; }
.day {
  padding: 9px 0 0 1px;
  text-align: center;
  font: 500 7px/11px Roboto, sans-serif;
  color: #70757a;
  background: linear-gradient(#dadce0, #dadce0) 0 100% / 1px 12px no-repeat;
}
.day b { display: block; font: 16px/28px Roboto, sans-serif; color: #3c4043; }
.day:nth-child(2) { grid-column: 3; }
.board { flex: 1 0 440px; grid-template-rows: repeat(64, minmax(0, 1fr)); }
.line { grid-column: 2 / -1; border-top: 1px solid #dfe1e5; }
.col { grid-row: 1 / -1; border-left: 1px solid #dfe1e5; }
.hour { grid-column: 1; align-self: center; margin-right: 5px; text-align: right; white-space: nowrap; font-size: 7px; line-height: 8px; color: #70757a; }
.mon { grid-column: 3; }
.tue { grid-column: 4; }
.wed { grid-column: 5; }
.thu { grid-column: 6; }
.fri { grid-column: 7; }
.sat { grid-column: 8; }
.sun { grid-column: 9; }
.event {
  margin: 0 8px 1px 1px;
  padding: 3px 4px 0;
  overflow: hidden;
  border-radius: 2px;
  background: #d3d3d3;
  color: #45494d;
  font-size: 7px;
  line-height: 9px;
}
.event b { font-weight: 600; }
.scroll { flex: none; width: 10px; padding: 160px 2px 53px 3px; display: flex; }
.scroll i { flex: 1; border-radius: 3px; background: #bdc1c9; }

/* Right rail */
.rail {
  flex: none;
  width: 30px;
  padding: 11px 0 11px 5px;
  display: flex;
  flex-direction: column;
  align-items: center;
  gap: 22px;
  border-left: 1px solid #dadce0;
}
.rail svg { width: 12px; height: 12px; }
.rail hr { width: 12px; margin: -1px 0; border: 0; border-top: 1px solid #dadce0; }
.rail .hide { margin-top: auto; }
```
